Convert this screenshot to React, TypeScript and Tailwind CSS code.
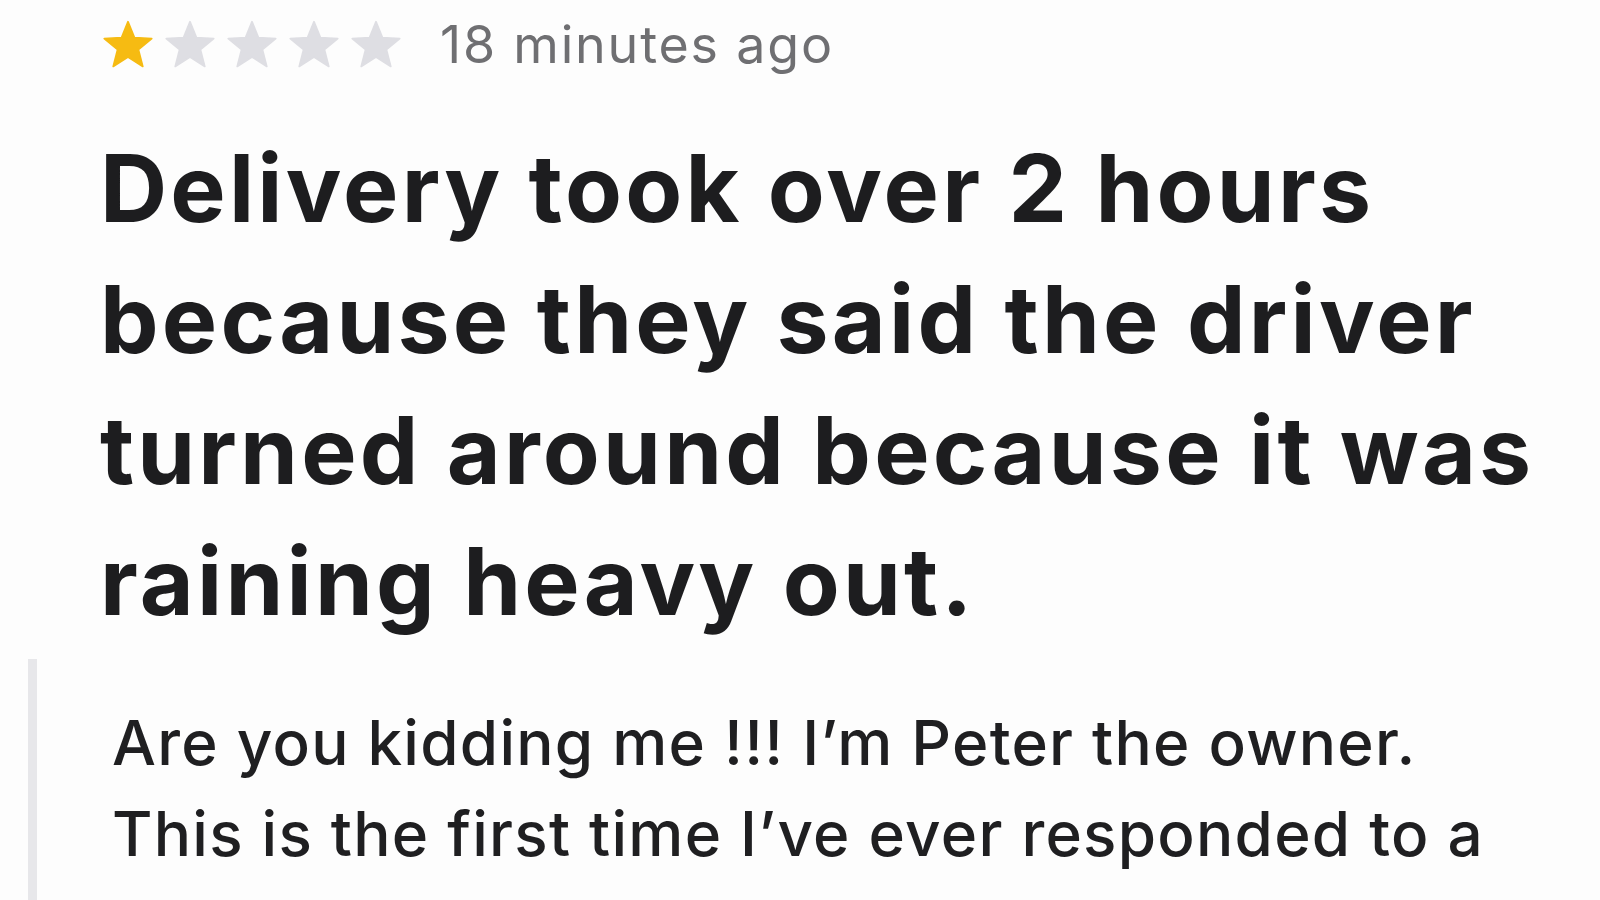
import React from "react";

const Star = ({ filled }: { filled: boolean }) => (
  <svg viewBox="0 0 24 24" className="w-[52px] h-[50px]">
    <path
      d="M12 0.8L15.1 8.4L23.4 8.9L17 14.2L19.1 22.3L12 17.8L4.9 22.3L7 14.2L0.6 8.9L8.9 8.4Z"
      fill={filled ? "#f6bb12" : "#dedee3"}
      stroke={filled ? "#f6bb12" : "#dedee3"}
      strokeWidth="0.8"
      strokeLinejoin="round"
    />
  </svg>
);

export default function App() {
  const rating = 1;

  return (
    <div className="w-[1600px] h-[900px] overflow-hidden bg-[#fdfdfd] font-['Inter',sans-serif]">
      {/* rating + time */}
      <div className="flex items-center pl-[102px] pt-[19px]">
        <div className="flex gap-[10px]">
          {[1, 2, 3, 4, 5].map((i) => (
            <Star key={i} filled={i <= rating} />
          ))}
        </div>
        <span className="ml-[38px] text-[52px] leading-none tracking-[1.8px] text-[#6f6f72]">18 minutes ago</span>
      </div>

      {/* review title */}
      <h1 className="pl-[100px] mt-[52px] text-[93px] leading-[131px] font-bold text-[#1d1d1f] tracking-[3.2px]">
        Delivery took over 2 hours
        <br />
        because they said the driver
        <br />
        turned around because it was
        <br />
        raining heavy out.
      </h1>

      {/* owner reply */}
      <div className="ml-[28px] mt-[12px] border-l-[9px] border-[#e7e7ea] pl-[75px] pt-[38px]">
        <p className="text-[62px] leading-[91px] font-medium tracking-[1.25px] text-[#1f1f21]">
          Are you kidding me !!! I’m Peter the owner.
          <br />
          This is the first time I’ve ever responded to a
          <br />
          review and I have to say something here.
        </p>
      </div>
    </div>
  );
}
